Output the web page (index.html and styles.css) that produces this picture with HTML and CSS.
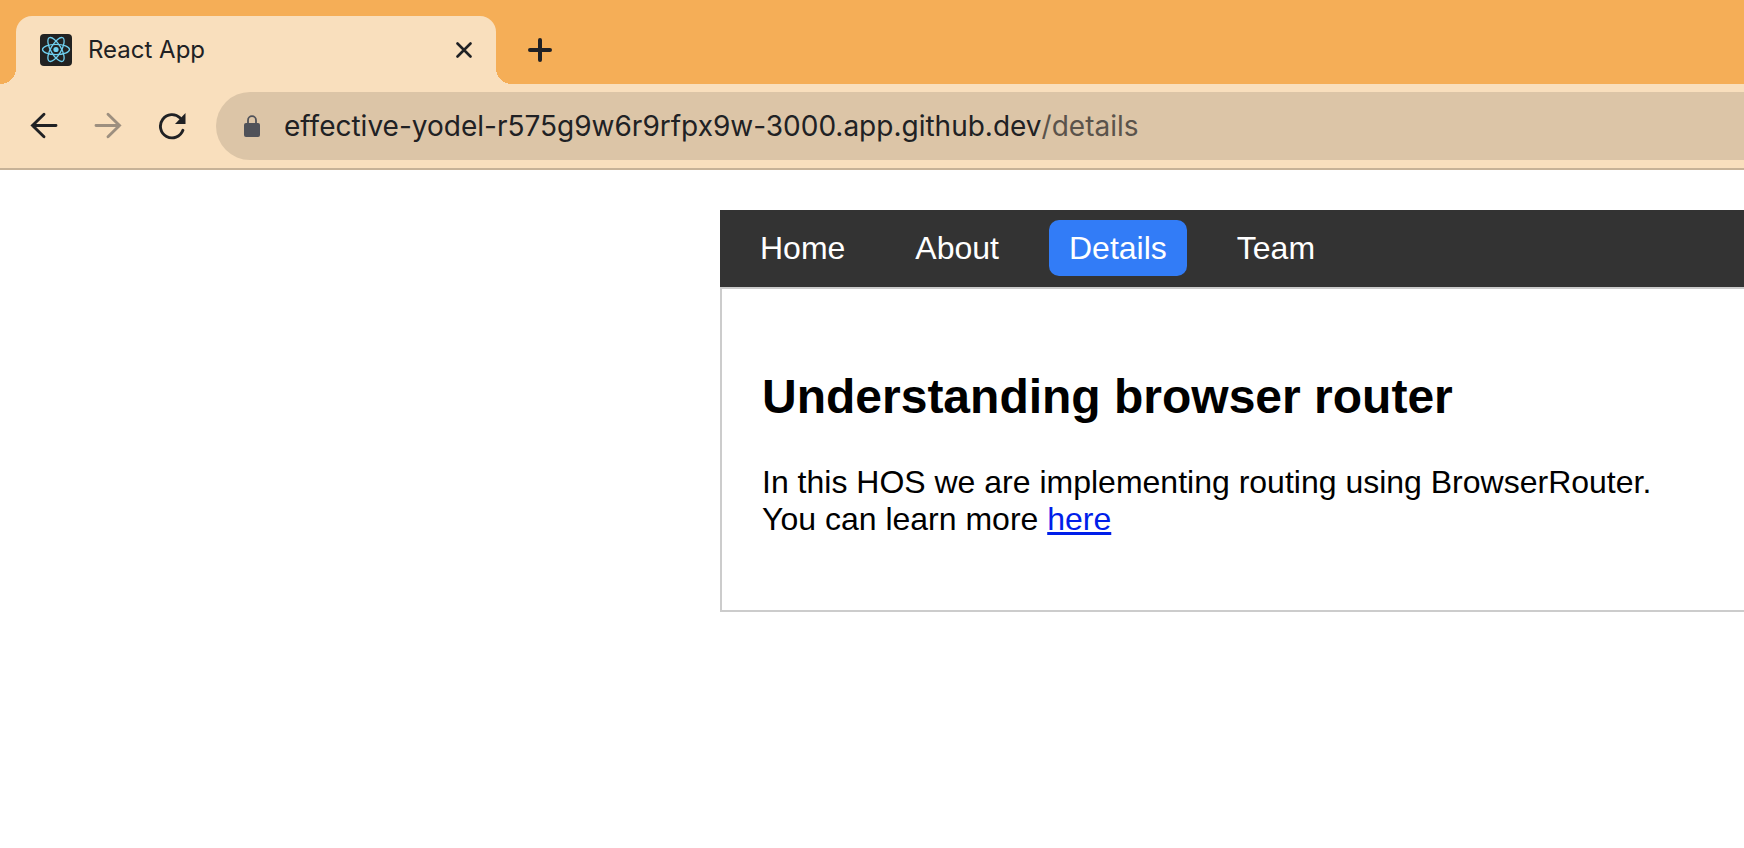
FILE: index.html
```html
<!DOCTYPE html>
<html lang="en">
<head>
<meta charset="utf-8">
<meta name="viewport" content="width=device-width, initial-scale=1">
<title>React App</title>
<link rel="stylesheet" href="styles.css">
</head>
<body>
<header class="browser">
  <div class="tabstrip">
    <div class="tab">
      <svg class="favicon" viewBox="0 0 32 32" aria-hidden="true">
        <rect width="32" height="32" rx="4" fill="#222"/>
        <g fill="none" stroke="#70d0f0" stroke-width="1.3">
          <ellipse cx="16" cy="15.5" rx="13.5" ry="5.2"/>
          <ellipse cx="16" cy="15.5" rx="13.5" ry="5.2" transform="rotate(60 16 15.5)"/>
          <ellipse cx="16" cy="15.5" rx="13.5" ry="5.2" transform="rotate(120 16 15.5)"/>
        </g>
        <circle cx="16" cy="15.5" r="2.6" fill="#70d0f0"/>
      </svg>
      <span class="tab-title">React App</span>
      <button class="icon-button" type="button" aria-label="Close tab">
        <svg class="icon-close" viewBox="0 0 16 16"><path d="M1.5 1.5l13 13M14.5 1.5l-13 13" fill="none" stroke="#202124" stroke-width="2.6" stroke-linecap="round"/></svg>
      </button>
    </div>
    <button class="icon-button new-tab" type="button" aria-label="New tab">
      <svg class="icon-plus" viewBox="0 0 24 24"><path d="M12 2v20M2 12h20" fill="none" stroke="#202124" stroke-width="4" stroke-linecap="round"/></svg>
    </button>
  </div>
  <div class="toolbar">
    <div class="history">
      <button class="icon-button" type="button" aria-label="Back">
        <svg class="icon-nav" viewBox="0 0 28 28"><path d="M26 13.5H2.5M14 2.3L2.5 13.5L14 24.7" fill="none" stroke="#202124" stroke-width="2.9" stroke-linecap="round"/></svg>
      </button>
      <button class="icon-button" type="button" aria-label="Forward" disabled>
        <svg class="icon-nav" viewBox="0 0 28 28"><path d="M2 13.5H25.5M14 2.3L25.5 13.5L14 24.7" fill="none" stroke="#9d8f7f" stroke-width="2.9" stroke-linecap="round"/></svg>
      </button>
      <button class="icon-button" type="button" aria-label="Reload">
        <svg class="icon-nav" viewBox="0 0 28 28"><path d="M24.9 18.3A11.6 11.6 0 1 1 22.2 6" fill="none" stroke="#202124" stroke-width="2.9" stroke-linecap="round"/><path d="M27.5 1v11H17z" fill="#202124"/></svg>
      </button>
    </div>
    <form class="omnibox">
      <svg class="icon-lock" viewBox="0 0 16 22" aria-hidden="true"><rect y="8" width="16" height="14" rx="2" fill="#505259"/><path d="M4 9V5.2a4 4 0 0 1 8 0V9" fill="none" stroke="#505259" stroke-width="1.8"/></svg>
      <input class="url url-host" type="text" aria-label="Site address" spellcheck="false" value="effective-yodel-r575g9w6r9rfpx9w-3000.app.github.dev">
      <input class="url url-path" type="text" aria-label="Page path" spellcheck="false" value="/details">
    </form>
  </div>
</header>
<div class="page">
  <nav class="nav">
    <a class="nav-link" href="#home">Home</a>
    <a class="nav-link" href="#about">About</a>
    <a class="nav-link active" href="#details" aria-current="page">Details</a>
    <a class="nav-link" href="#team">Team</a>
  </nav>
  <main class="content">
    <h2 class="heading">Understanding browser router</h2>
    <p class="text">In this HOS we are implementing routing using BrowserRouter.<br>You can learn more <a class="link" href="#learn">here</a></p>
  </main>
</div>
</body>
</html>
```

FILE: styles.css
```css
*, *::before, *::after { box-sizing: border-box; }

body {
  margin: 0;
  background: #fff;
  color: #000;
  font-family: "Liberation Sans", Arial, sans-serif;
  overflow-x: hidden;
}

.browser { font-family: Inter, sans-serif; color: #202124; }

.icon-button {
  display: grid;
  place-items: center;
  width: 32px;
  height: 32px;
  padding: 0;
  border: 0;
  background: none;
}

.tabstrip {
  display: flex;
  align-items: center;
  gap: 28px;
  padding: 16px 16px 0;
  background: #f5ae57;
}

.tab {
  position: relative;
  display: flex;
  align-items: center;
  gap: 16px;
  width: 480px;
  height: 68px;
  padding: 0 16px 0 24px;
  border-radius: 16px 16px 0 0;
  background: #f9dfbd;
}

/* Concave feet that join the tab to the toolbar */
.tab::before, .tab::after {
  content: "";
  position: absolute;
  bottom: 0;
  width: 16px;
  height: 16px;
}
.tab::before { right: 100%; background: radial-gradient(circle at 0 0, transparent 16px, #f9dfbd 16px); }
.tab::after { left: 100%; background: radial-gradient(circle at 100% 0, transparent 16px, #f9dfbd 16px); }

.favicon { width: 32px; height: 32px; }
.tab-title { flex: 1; font-size: 24px; line-height: 32px; }
.icon-close { width: 16px; height: 16px; }
.icon-plus { width: 24px; height: 24px; }

.toolbar {
  display: flex;
  align-items: center;
  gap: 28px;
  padding: 8px 0 8px 28px;
  background: #f9dfbd;
  border-bottom: 2px solid #c7b297;
}
.history { display: flex; gap: 32px; }
.icon-nav { width: 28px; height: 28px; }

.omnibox {
  flex: 1;
  display: flex;
  align-items: center;
  height: 68px;
  padding-left: 28px;
  border-radius: 34px 0 0 34px;
  background: #dcc5a7;
}
.icon-lock { width: 16px; height: 22px; margin-right: 24px; }
.url {
  padding: 0;
  border: 0;
  outline: 0;
  background: none;
  font: 28px/36px Inter, sans-serif;
}
.url-host { field-sizing: content; color: #202124; }
.url-path { flex: 1; min-width: 0; color: #5a534b; }

.page { padding: 40px 0 40px 720px; }

.nav {
  display: flex;
  gap: 30px;
  padding: 10px 20px 11px;
  background: #333;
}
.nav-link {
  padding: 10px 20px;
  border-radius: 10px;
  color: #fff;
  font-size: 32px;
  line-height: 36px;
  text-decoration: none;
}
.nav-link.active { background: #327cf7; }

.content {
  padding: 40px;
  border: 2px solid #ccc;
  border-right: 0;
}
.heading { margin: 40px 0; font-size: 48px; line-height: 55px; }
.text { margin: 0 0 32px; font-size: 32px; line-height: 37px; }
.link { color: #001ee9; }
```
